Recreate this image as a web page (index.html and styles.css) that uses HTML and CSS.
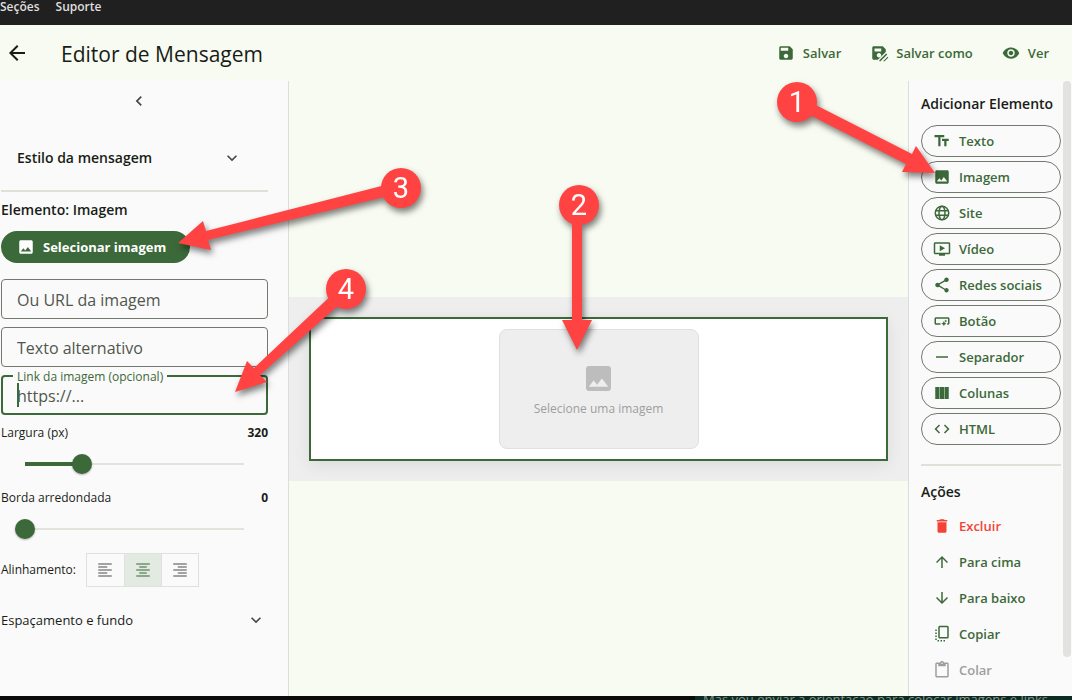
FILE: index.html
```
<!DOCTYPE html>
<html lang="pt-BR">
<head>
    <title>Editor de Mensagem</title>
    <meta charset="utf-8">
    <meta name="viewport" content="width=device-width, initial-scale=1">
    <link rel="stylesheet" href="styles.css">
</head>

<body>
    <!-- Menu da janela -->
    <nav class="menu-janela">
        <a href="#">Seções</a>
        <a href="#">Suporte</a>
    </nav>

    <!-- Cabeçalho -->
    <header class="cabecalho">
        <button class="voltar" type="button" aria-label="Voltar">
            <svg class="icone-grande" viewBox="0 0 24 24"><path d="M20 11H7.83l5.59-5.59L12 4l-8 8 8 8 1.41-1.41L7.83 13H20v-2z"/></svg>
        </button>
        <h1>Editor de Mensagem</h1>
        <div class="acoes-topo">
            <button type="button">
                <svg class="icone" viewBox="0 0 24 24"><path d="M17 3H5c-1.11 0-2 .9-2 2v14c0 1.1.89 2 2 2h14c1.1 0 2-.9 2-2V7l-4-4zm-5 16c-1.66 0-3-1.34-3-3s1.34-3 3-3 3 1.34 3 3-1.34 3-3 3zm3-10H5V5h10v4z"/></svg>
                Salvar
            </button>
            <button type="button">
                <svg class="icone" viewBox="0 0 24 24"><path fill-rule="evenodd" d="M21 10.500V7l-4-4H5c-1.100 0-2 .9-2 2v14c0 1.100.9 2 2 2h5.500L21 10.500zM6 6h9v4H6V6zm6 12c-1.660 0-3-1.340-3-3s1.340-3 3-3 3 1.340 3 3-1.340 3-3 3z"/><path d="M21.500 12.500 23 14l-9 9h-1.500v-1.500zM23.500 17l1 1-5 5h-2z"/></svg>
                Salvar como
            </button>
            <button type="button">
                <svg class="icone" viewBox="0 0 24 24"><path d="M12 4.5C7 4.5 2.73 7.61 1 12c1.73 4.39 6 7.5 11 7.5s9.27-3.11 11-7.5c-1.73-4.39-6-7.5-11-7.5zM12 17c-2.76 0-5-2.24-5-5s2.24-5 5-5 5 2.24 5 5-2.24 5-5 5zm0-8c-1.66 0-3 1.34-3 3s1.34 3 3 3 3-1.34 3-3-1.34-3-3-3z"/></svg>
                Ver
            </button>
        </div>
    </header>

    <main class="editor">
        <!-- Propriedades do elemento -->
        <aside class="propriedades">
            <button class="recolher" type="button" aria-label="Recolher painel">
                <svg class="icone-medio" viewBox="0 0 24 24"><path d="M15.41 7.41 14 6l-6 6 6 6 1.41-1.41L10.83 12z"/></svg>
            </button>
            <button class="secao secao-estilo" type="button">
                Estilo da mensagem
                <svg class="icone-medio" viewBox="0 0 24 24"><path d="M16.59 8.59 12 13.17 7.41 8.59 6 10l6 6 6-6z"/></svg>
            </button>
            <hr>
            <h2>Elemento: Imagem</h2>
            <button class="selecionar" type="button">
                <svg class="icone" viewBox="0 0 24 24"><path d="M21 19V5c0-1.1-.9-2-2-2H5c-1.1 0-2 .9-2 2v14c0 1.1.9 2 2 2h14c1.1 0 2-.9 2-2zM8.500 13.500l2.500 3.010L14.500 12l4.500 6H5l3.500-4.500z"/></svg>
                Selecionar imagem
            </button>

            <div class="campo">
                <input type="text" id="url" aria-label="Ou URL da imagem" placeholder="Ou URL da imagem">
            </div>
            <div class="campo">
                <input type="text" id="alt" aria-label="Texto alternativo" placeholder="Texto alternativo">
            </div>
            <div class="campo campo-ativo">
                <label for="link">Link da imagem (opcional)</label>
                <input type="text" id="link" placeholder="https://...">
                <span class="cursor"></span>
            </div>

            <div class="linha-valor">
                <label for="largura">Largura (px)</label>
                <output for="largura">320</output>
            </div>
            <input class="controle" type="range" id="largura" min="10" max="1200" value="320" style="--parte: 0.26">
            <div class="linha-valor">
                <label for="borda">Borda arredondada</label>
                <output for="borda">0</output>
            </div>
            <input class="controle" type="range" id="borda" min="0" max="100" value="0" style="--parte: 0">

            <div class="alinhamento">
                <span>Alinhamento:</span>
                <div class="grupo">
                    <button type="button" aria-label="Esquerda">
                        <svg class="icone" viewBox="0 0 24 24"><path d="M15 15H3v2h12v-2zm0-8H3v2h12V7zM3 13h18v-2H3v2zm0 8h18v-2H3v2zM3 3v2h18V3H3z"/></svg>
                    </button>
                    <button class="marcado" type="button" aria-label="Centro" aria-pressed="true">
                        <svg class="icone" viewBox="0 0 24 24"><path d="M7 15v2h10v-2H7zm-4 6h18v-2H3v2zm0-8h18v-2H3v2zm4-6v2h10V7H7zM3 3v2h18V3H3z"/></svg>
                    </button>
                    <button type="button" aria-label="Direita">
                        <svg class="icone" viewBox="0 0 24 24"><path d="M3 21h18v-2H3v2zm6-4h12v-2H9v2zm-6-4h18v-2H3v2zm6-4h12V7H9v2zM3 3v2h18V3H3z"/></svg>
                    </button>
                </div>
            </div>

            <button class="secao secao-fundo" type="button">
                Espaçamento e fundo
                <svg class="icone-medio" viewBox="0 0 24 24"><path d="M16.59 8.59 12 13.17 7.41 8.59 6 10l6 6 6-6z"/></svg>
            </button>
        </aside>

        <!-- Prévia da mensagem -->
        <section class="previa">
            <div class="mensagem">
                <div class="elemento">
                    <div class="sem-imagem">
                        <svg viewBox="3 3 18 18"><path d="M21 19V5c0-1.100-.9-2-2-2H5c-1.100 0-2 .9-2 2v14c0 1.100.9 2 2 2h14c1.100 0 2-.9 2-2zM8.500 13.500l2.500 3.010L14.500 12l4.500 6H5l3.500-4.500z"/></svg>
                        <span>Selecione uma imagem</span>
                    </div>
                </div>
            </div>
        </section>

        <!-- Elementos e ações -->
        <aside class="elementos">
            <div class="lista">
                <h2>Adicionar Elemento</h2>
                <div class="botoes">
                    <button class="adicionar" type="button">
                        <svg class="icone" viewBox="0 0 24 24"><path d="M2 4v3h5v12h3V7h5V4H2zm19 5h-9v3h3v7h3v-7h3V9z"/></svg>
                        Texto
                    </button>
                    <button class="adicionar" type="button">
                        <svg class="icone" viewBox="0 0 24 24"><path d="M21 19V5c0-1.100-.9-2-2-2H5c-1.100 0-2 .9-2 2v14c0 1.100.9 2 2 2h14c1.100 0 2-.9 2-2zM8.500 13.500l2.500 3.010L14.500 12l4.500 6H5l3.500-4.500z"/></svg>
                        Imagem
                    </button>
                    <button class="adicionar" type="button">
                        <svg class="icone tracado" viewBox="0 0 24 24"><circle cx="12" cy="12" r="9"/><ellipse cx="12" cy="12" rx="4" ry="9"/><path d="M3.500 9h17M3.500 15h17"/></svg>
                        Site
                    </button>
                    <button class="adicionar" type="button">
                        <svg class="icone" viewBox="0 0 24 24"><path d="M9 7v8l7-4zm12-4H3c-1.110 0-2 .89-2 2v12c0 1.100.89 2 2 2h5v2h8v-2h5c1.100 0 1.990-.9 1.990-2L23 5c0-1.110-.9-2-2-2zm0 14H3V5h18v12z"/></svg>
                        Vídeo
                    </button>
                    <button class="adicionar" type="button">
                        <svg class="icone" viewBox="0 0 24 24"><path d="M18 16.080c-.76 0-1.440.3-1.960.77L8.910 12.700c.05-.23.09-.46.09-.7s-.04-.47-.09-.7l7.050-4.110c.54.5 1.250.81 2.040.81 1.660 0 3-1.340 3-3s-1.340-3-3-3-3 1.340-3 3c0 .24.04.47.09.7L8.040 9.810C7.500 9.310 6.790 9 6 9c-1.660 0-3 1.340-3 3s1.340 3 3 3c.79 0 1.500-.31 2.040-.81l7.120 4.160c-.05.21-.08.43-.08.65 0 1.610 1.310 2.920 2.920 2.920s2.920-1.310 2.920-2.920-1.310-2.920-2.920-2.920z"/></svg>
                        Redes sociais
                    </button>
                    <button class="adicionar" type="button">
                        <svg class="icone" viewBox="0 0 24 24"><path d="M22 9v6c0 1.100-.9 2-2 2h-1v-2h1V9H4v6h6v2H4c-1.100 0-2-.9-2-2V9c0-1.100.9-2 2-2h16c1.100 0 2 .9 2 2zm-7.500 10 1.090-2.410L18 15.500l-2.410-1.090L14.500 12l-1.090 2.410L11 15.500l2.410 1.090zm2.500-5 .62-1.380L19 12l-1.380-.62L17 10l-.62 1.380L15 12l1.380.62z"/></svg>
                        Botão
                    </button>
                    <button class="adicionar" type="button">
                        <svg class="icone" viewBox="0 0 24 24"><path d="M4 11h16v2H4z"/></svg>
                        Separador
                    </button>
                    <button class="adicionar" type="button">
                        <svg class="icone" viewBox="0 0 24 24"><path d="M3 4h5.700v16H3zM9.300 4h5.400v16H9.300zM15.300 4H21v16h-5.700z"/></svg>
                        Colunas
                    </button>
                    <button class="adicionar" type="button">
                        <svg class="icone" viewBox="0 0 24 24"><path d="M9.400 16.600 4.800 12l4.600-4.600L8 6l-6 6 6 6 1.400-1.400zm5.200 0 4.600-4.600-4.600-4.600L16 6l6 6-6 6-1.400-1.400z"/></svg>
                        HTML
                    </button>
                </div>
                <hr>
                <h2>Ações</h2>
                <div class="botoes">
                    <button class="acao excluir" type="button">
                        <svg class="icone" viewBox="0 0 24 24"><path d="M6 19c0 1.100.9 2 2 2h8c1.100 0 2-.9 2-2V7H6v12zM19 4h-3.500l-1-1h-5l-1 1H5v2h14V4z"/></svg>
                        Excluir
                    </button>
                    <button class="acao" type="button">
                        <svg class="icone" viewBox="0 0 24 24"><path d="m4 12 1.410 1.410L11 7.830V20h2V7.830l5.580 5.590L20 12l-8-8-8 8z"/></svg>
                        Para cima
                    </button>
                    <button class="acao" type="button">
                        <svg class="icone" viewBox="0 0 24 24"><path d="m20 12-1.410-1.410L13 16.170V4h-2v12.170l-5.580-5.590L4 12l8 8 8-8z"/></svg>
                        Para baixo
                    </button>
                    <button class="acao" type="button">
                        <svg class="icone tracado" viewBox="0 0 24 24"><rect x="8" y="2" width="12" height="15" rx="1"/><path stroke-dasharray="2 2" d="M4 6v16M6 21h10"/></svg>
                        Copiar
                    </button>
                    <button class="acao" type="button" disabled>
                        <svg class="icone" viewBox="0 0 24 24"><path d="M19 2h-4.180C14.400.84 13.300 0 12 0S9.600.84 9.180 2H5c-1.100 0-2 .9-2 2v16c0 1.100.9 2 2 2h14c1.100 0 2-.9 2-2V4c0-1.100-.9-2-2-2zm-7 0c.55 0 1 .45 1 1s-.45 1-1 1-1-.45-1-1 .45-1 1-1zm7 18H5V4h2v3h10V4h2v16z"/></svg>
                        Colar
                    </button>
                </div>
            </div>
            <div class="rolagem"></div>
        </aside>
    </main>

    <!-- Janela de trás -->
    <footer class="rodape">
        <p>Mas vou enviar a orientação para colocar imagens e links</p>
    </footer>

    <!-- Passos numerados -->
    <svg class="passos" viewBox="0 0 1072 700" width="1072" height="700">
        <g class="passo">
            <path d="M800 97 912 154 916 146 935 173 902 172 906 164 794 107z"/>
            <circle cx="797" cy="102" r="20"/>
            <text x="797" y="112">1</text>
        </g>
        <g class="passo">
            <path d="M572 210h10v110h10l-15 30-15-30h10z"/>
            <circle cx="579" cy="205" r="20"/>
            <text x="579" y="215">2</text>
        </g>
        <g class="passo">
            <path d="M401 181 206 231 203 221 178 243 211 250 208 240 401 193z"/>
            <circle cx="401" cy="188" r="20"/>
            <text x="401" y="198">3</text>
        </g>
        <g class="passo">
            <path d="M338 289 254 368 247 361 235 392 267 382 260 375 350 295z"/>
            <circle cx="346" cy="289" r="20"/>
            <text x="346" y="299">4</text>
        </g>
    </svg>
</body>

</html>
```

FILE: styles.css
```
* {
    box-sizing: border-box;
}

body {
    display: flex;
    flex-direction: column;
    height: 100vh;
    margin: 0;
    overflow: hidden;
    background-color: #f8fbf1;
    color: #191d17;
    font-family: "Open Sans", "Noto Sans", sans-serif;
    font-size: 13px;
    line-height: 20px;
}

button {
    display: flex;
    align-items: center;
    padding: 0;
    border: none;
    background: none;
    color: #3c6939;
    font: inherit;
    font-weight: 600;
    white-space: nowrap;
}

h1, h2, p {
    margin: 0;
}

h2 {
    font-size: 14px;
    font-weight: 600;
    line-height: 20px;
    white-space: nowrap;
}

hr {
    width: 100%;
    height: 2px;
    margin: 0;
    border: none;
    background-color: #dfe1d9;
}

svg {
    flex: none;
    fill: currentColor;
}

.icone {
    width: 18px;
    height: 18px;
    overflow: visible;
}

.icone-medio {
    width: 20px;
    height: 20px;
    color: #424940;
}

.icone-grande {
    width: 24px;
    height: 24px;
}

.tracado {
    fill: none;
    stroke: currentColor;
    stroke-width: 2;
}

/* Menu e cabeçalho */
.menu-janela {
    display: flex;
    flex: none;
    gap: 16px;
    height: 25px;
    background-color: #202020;
    line-height: 14px;
}

.menu-janela a {
    color: #dedede;
    font-size: 12px;
    font-weight: 600;
    text-decoration: none;
}

.cabecalho {
    display: flex;
    flex: none;
    align-items: center;
    height: 56px;
    padding: 0 23px 0 5px;
}

.voltar {
    color: #191d17;
}

.cabecalho h1 {
    flex: 1;
    margin-left: 32px;
    padding-top: 2px;
    font-size: 21px;
    font-weight: 400;
    line-height: 28px;
}

.acoes-topo {
    display: flex;
    gap: 29px;
}

.acoes-topo button {
    gap: 8px;
}

.editor {
    display: flex;
    flex: 1;
    min-height: 0;
}

/* Painel esquerdo */
.propriedades {
    display: flex;
    flex: none;
    flex-direction: column;
    align-items: stretch;
    width: 289px;
    padding: 10px 20px 0 1px;
    border-right: 1px solid #dcdedd;
    background-color: #fafafa;
}

.recolher {
    align-self: center;
    margin-left: 8px;
}

.secao {
    justify-content: space-between;
    color: #191d17;
}

.secao-estilo {
    margin: 37px 0 22px;
    padding: 0 26px 0 16px;
    font-size: 14px;
    font-weight: 600;
}

.secao-estilo + hr {
    margin-bottom: 8px;
}

.secao-fundo {
    margin-top: 23px;
    padding-right: 2px;
    font-weight: 400;
}

.selecionar {
    align-self: flex-start;
    gap: 8px;
    height: 32px;
    margin: 11px 0 16px;
    padding: 0 24px 0 16px;
    border-radius: 16px;
    background-color: #3c6939;
    color: #ffffff;
    font-weight: 700;
}

.campo {
    position: relative;
    margin-bottom: 8px;
}

.campo input {
    display: block;
    width: 100%;
    height: 40px;
    padding: 2px 15px 0;
    border: 1px solid #72796f;
    border-radius: 4px;
    background-color: transparent;
    color: #191d17;
    font: inherit;
    font-size: 16px;
}

.campo input::placeholder {
    color: #50564d;
    opacity: 1;
}

.campo-ativo input {
    padding: 2px 14px 0;
    border: 2px solid #3c6939;
}

.campo-ativo label {
    position: absolute;
    top: -6px;
    left: 12px;
    padding: 0 4px;
    background-color: #fafafa;
    color: #3c6939;
    font-size: 12px;
    line-height: 16px;
}

.cursor {
    position: absolute;
    top: 8px;
    left: 16px;
    width: 2px;
    height: 24px;
    background-color: #3c6939;
}

.linha-valor {
    display: flex;
    justify-content: space-between;
    font-size: 12px;
}

.linha-valor output {
    font-weight: 700;
}

.controle {
    height: 20px;
    margin: 11px 14px 14px;
    appearance: none;
    background:
        linear-gradient(#3c6939, #3c6939) 10px center / calc((100% - 20px) * var(--parte)) 4px no-repeat,
        linear-gradient(#e2e4dc, #e2e4dc) center / calc(100% - 20px) 2px no-repeat;
}

.controle::-webkit-slider-thumb {
    width: 20px;
    height: 20px;
    appearance: none;
    border-radius: 50%;
    background-color: #3c6939;
    box-shadow: 0 1px 2px rgba(0, 0, 0, 0.3);
}

.alinhamento {
    display: flex;
    align-items: center;
    gap: 10px;
    font-size: 12px;
}

.grupo {
    display: flex;
    border: 1px solid #e0e0e0;
}

.grupo button {
    justify-content: center;
    width: 37px;
    height: 32px;
    color: #858585;
}

.grupo button + button {
    border-left: 1px solid #e0e0e0;
}

.grupo .marcado {
    background-color: #e2eae2;
    color: #6f946c;
}

/* Prévia */
.previa {
    display: flex;
    flex: 1;
    flex-direction: column;
    justify-content: center;
    min-width: 0;
}

.mensagem {
    padding: 20px;
    background-color: #eeeeee;
}

.elemento {
    display: flex;
    justify-content: center;
    padding: 10px;
    border: 2px solid #3c6939;
    background-color: #ffffff;
    box-shadow: 0 4px 16px rgba(0, 0, 0, 0.08);
}

.sem-imagem {
    display: flex;
    flex-direction: column;
    align-items: center;
    justify-content: center;
    gap: 8px;
    width: 200px;
    height: 120px;
    padding-top: 8px;
    border: 1px solid #e0e0e0;
    border-radius: 8px;
    background-color: #eeeeee;
    color: #9e9e9e;
    font-size: 12px;
}

.sem-imagem svg {
    width: 25px;
    height: 25px;
    color: #bdbdbd;
}

/* Painel direito */
.elementos {
    display: flex;
    flex: none;
    width: 164px;
    border-left: 1px solid #dcdedd;
    border-radius: 0 0 6px 0;
    background-color: #fafafa;
}

.lista {
    flex: 1;
    min-width: 0;
    padding: 13px 2px 0 12px;
}

.lista hr {
    margin: 19px 0 16px;
}

.botoes {
    display: flex;
    flex-direction: column;
    gap: 4px;
    margin-top: 11px;
}

.lista hr ~ .botoes {
    margin-top: 8px;
}

.adicionar, .acao {
    gap: 8px;
    width: 100%;
    height: 32px;
    padding: 0 12px;
}

.adicionar {
    padding: 0 11px;
    border: 1px solid #72796f;
    border-radius: 16px;
}

.excluir {
    color: #f44336;
}

.acao:disabled {
    color: #9e9e9e;
}

.rolagem {
    width: 8px;
    height: 576px;
    margin-right: 1px;
    border-radius: 4px;
    background-color: #e2e3e0;
}

.rodape {
    flex: none;
    height: 4px;
    padding-left: 703px;
    overflow: hidden;
    background: linear-gradient(to right, #0b0b0b 695px, #0c2b22 695px);
    color: #8a9690;
    font-size: 13px;
    line-height: 6px;
    white-space: nowrap;
}

/* Passos */
.passos {
    position: absolute;
    top: 0;
    left: 0;
    pointer-events: none;
}

.passo {
    fill: #ff4343;
    filter: drop-shadow(2px 4px 3px rgba(0, 0, 0, 0.5));
}

.passo text {
    fill: #ffffff;
    font-family: Roboto, Arial, sans-serif;
    font-size: 29px;
    text-anchor: middle;
}
```
